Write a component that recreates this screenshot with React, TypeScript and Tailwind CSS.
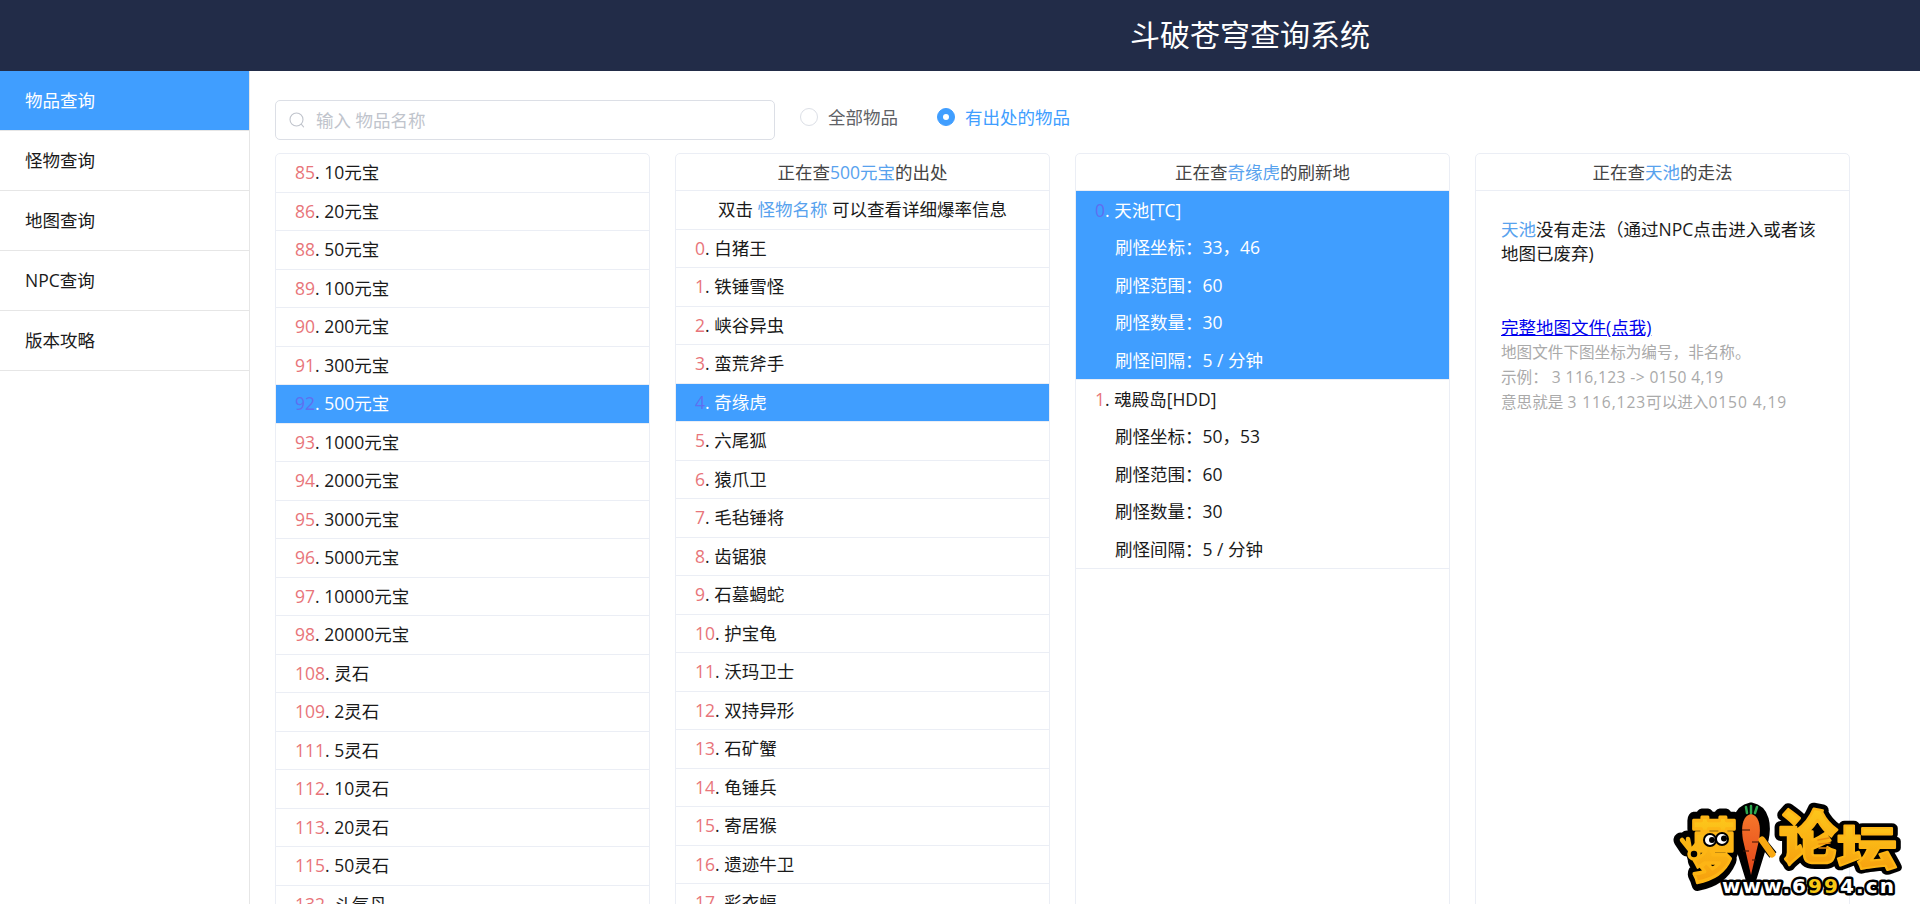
const FONT = '[font-family:"Open_Sans","Noto_Sans_CJK_SC",sans-serif]'

const NAV = ['物品查询', '怪物查询', '地图查询', 'NPC查询', '版本攻略']

const ITEMS: [number, string][] = [
  [85, '10元宝'], [86, '20元宝'], [88, '50元宝'], [89, '100元宝'], [90, '200元宝'],
  [91, '300元宝'], [92, '500元宝'], [93, '1000元宝'], [94, '2000元宝'], [95, '3000元宝'],
  [96, '5000元宝'], [97, '10000元宝'], [98, '20000元宝'], [108, '灵石'], [109, '2灵石'],
  [111, '5灵石'], [112, '10灵石'], [113, '20灵石'], [115, '50灵石'], [132, '斗气丹'],
]

const MONSTERS = [
  '白猪王', '铁锤雪怪', '峡谷异虫', '蛮荒斧手', '奇缘虎', '六尾狐', '猿爪卫', '毛毡锤将', '齿锯狼',
  '石墓蝎蛇', '护宝龟', '沃玛卫士', '双持异形', '石矿蟹', '龟锤兵', '寄居猴', '遗迹牛卫', '彩衣蝠',
]

const SPAWNS = [
  { name: '天池[TC]', coord: '33，46', range: 60, count: 30 },
  { name: '魂殿岛[HDD]', coord: '50，53', range: 60, count: 30 },
]

function Row({ index, name, active }: { index: number; name: string; active?: boolean }) {
  return (
    <div className={`flex h-[38.5px] shrink-0 items-center border-b border-[#ebeef5] pb-[1px] pl-[19px] ${active ? 'bg-[#409eff] text-white' : 'text-[#1a1a1a]'}`}>
      <span className={active ? 'text-[#5f6ff0]' : 'text-[#e8757a]'}>{index}</span>
      <span className="whitespace-pre">. {name}</span>
    </div>
  )
}

function Card({ children }: { children: React.ReactNode }) {
  return (
    <div className="flex w-[375px] shrink-0 flex-col rounded-t-[5px] border border-[#ebeef5]">
      {children}
    </div>
  )
}

function CardTitle({ before, mark, after }: { before: string; mark: string; after: string }) {
  return (
    <div className="flex h-[37px] shrink-0 items-center justify-center border-b border-[#ebeef5] text-[#444]">
      {before}<span className="text-[#58a2ee]">{mark}</span>{after}
    </div>
  )
}

function Spawn({ index, name, coord, range, count, active }: { index: number; name: string; coord: string; range: number; count: number; active?: boolean }) {
  return (
    <div className={`flex flex-col border-b border-[#ebeef5] pl-[19px] ${active ? 'bg-[#409eff] text-white' : 'text-[#1a1a1a]'}`}>
      <div className="flex h-[37.6px] items-center">
        <span className={active ? 'text-[#5f6ff0]' : 'text-[#e8757a]'}>{index}</span>
        <span className="whitespace-pre">. {name}</span>
      </div>
      <div className="flex h-[37.6px] items-center pl-[20px]">刷怪坐标：{coord}</div>
      <div className="flex h-[37.6px] items-center pl-[20px]">刷怪范围：{range}</div>
      <div className="flex h-[37.6px] items-center pl-[20px]">刷怪数量：{count}</div>
      <div className="flex h-[37.6px] items-center pl-[20px]">刷怪间隔：5 / 分钟</div>
    </div>
  )
}

function Radio({ label, checked }: { label: string; checked?: boolean }) {
  return (
    <label className={`flex items-center gap-[10px] ${checked ? 'text-[#409eff]' : 'text-[#606266]'}`}>
      <span className={`flex size-[18px] items-center justify-center rounded-full border ${checked ? 'border-[#409eff] bg-[#409eff]' : 'border-[#dcdfe6] bg-white'}`}>
        {checked && <span className="size-[6px] rounded-full bg-white" />}
      </span>
      {label}
    </label>
  )
}

function Logo() {
  const glyphs = (
    <>
      <text transform="translate(19 72.6) scale(1 1.45)" fontSize="46">萝</text>
      <text x="107" y="57" fontSize="58">论</text>
      <text transform="translate(165 63) scale(1 .78)" fontSize="60">坛</text>
    </>
  )
  return (
    <svg viewBox="0 0 232 96" className="absolute bottom-[6px] right-[16px] h-[96px] w-[232px]">
      <defs>
        <linearGradient id="gold" x1="0" y1="0" x2="0" y2="1">
          <stop offset="0" stopColor="#ffd21f" />
          <stop offset="1" stopColor="#f59a0c" />
        </linearGradient>
        <linearGradient id="carrot" x1="0" y1="0" x2="0" y2="1">
          <stop offset="0" stopColor="#f6762a" />
          <stop offset="1" stopColor="#e2451b" />
        </linearGradient>
      </defs>
      <g fontFamily='"Noto Sans CJK SC", sans-serif' fontWeight="900" strokeLinejoin="round">
        {/* black outline first, then the rounded gold letters on top */}
        <g fill="#000" stroke="#000" strokeWidth="12">{glyphs}</g>
        <path d="M15 47 L9 38 M15 47 L15 36 M21 50 L24 58" stroke="#000" strokeWidth="15" strokeLinecap="round" />
        <path d="M79 5 C64 8 63 24 66 38 L79 80 L92 38 C95 24 94 8 79 5Z M88 37 L101 53" fill="#000" stroke="#000" strokeWidth="9" strokeLinejoin="round" />
        <g fill="url(#gold)" stroke="#fdb515" strokeWidth="2.5">{glyphs}</g>
      </g>
      {/* ok hand left of the first character */}
      <path d="M18 48 L10 38 M18 48 L16 37 M19 49 L25 42" stroke="#fbb614" strokeWidth="4.5" strokeLinecap="round" />
      <circle cx="22" cy="52" r="5" fill="#000" stroke="#fbb614" strokeWidth="3.5" />
      {/* carrot standing in for 卜 */}
      <path d="M79 12 C70 14 69 26 71 38 L79 73 L87 38 C89 26 88 14 79 12Z" fill="url(#carrot)" />
      <path d="M75 11 L74 5 M79 11 V4 M83 11 L85 5" stroke="#2fa84f" strokeWidth="2.5" strokeLinecap="round" />
      <path d="M70 28 H78 M80 40 H87 M71 49 H77 M80 58 H84" stroke="#3a1305" strokeWidth="1" />
      <path d="M90 38 L100 52" stroke="#f9a911" strokeWidth="7" strokeLinecap="round" />
      {/* eyes on the first character */}
      <circle cx="38" cy="38" r="6" fill="#fff" stroke="#000" strokeWidth="2" />
      <circle cx="50" cy="37" r="6" fill="#fff" stroke="#000" strokeWidth="2" />
      <circle cx="40" cy="38" r="3" fill="#000" />
      <circle cx="52" cy="36.5" r="3" fill="#000" />
      {/* little hand inside 论 */}
      <path d="M146 38 L157 36 M147 42 L158 41 M147 46 L156 46" stroke="#e88a10" strokeWidth="1.5" strokeLinecap="round" />
      <text x="50" y="91" fontFamily='"DejaVu Sans", sans-serif' fontWeight="700" fontSize="20" fill="#fff" stroke="#000" strokeWidth="5" strokeLinejoin="round" paintOrder="stroke" textLength="172">
        www.6<tspan fill="#f7c815">99</tspan>4.cn
      </text>
    </svg>
  )
}

export default function App() {
  return (
    <div className={`relative flex h-[904px] flex-col overflow-hidden bg-white text-[17.5px] ${FONT}`}>
      <header className="flex h-[71px] shrink-0 items-center justify-center bg-[#222c48] pb-[3px] pl-[580px] text-[30px] text-white">
        斗破苍穹查询系统
      </header>
      <div className="flex min-h-0 flex-1">
        <nav className="w-[250px] shrink-0 border-r border-[#e6e6e6]">
          {NAV.map((label, i) => (
            <div key={label} className={`flex h-[60px] items-center border-b border-[#e6e6e6] pl-[25px] ${i === 0 ? 'bg-[#409eff] text-white' : 'text-[#1a1a1a]'}`}>
              {label}
            </div>
          ))}
        </nav>
        <main className="min-w-0 flex-1 pl-[25px]">
          <div className="flex h-[82px] items-start pt-[29px]">
            <div className="relative h-[40px] w-[500px]">
              <svg viewBox="0 0 16 16" fill="none" stroke="#c0c4cc" strokeWidth="1.1" className="absolute left-[14px] top-[12px] size-[16px]">
                <circle cx="7.5" cy="7.5" r="6.5" />
                <path d="M12.2 12.2 L14.6 14.8" strokeLinecap="round" />
              </svg>
              <input
                placeholder="输入 物品名称"
                className="h-full w-full rounded-[5px] border border-[#dcdfe6] pb-[1px] pl-[40px] outline-none placeholder:text-[#c0c4cc]"
              />
            </div>
            <div className="ml-[25px] flex h-[34px] items-center gap-[39px]">
              <Radio label="全部物品" />
              <Radio label="有出处的物品" checked />
            </div>
          </div>
          <div className="flex gap-[25px]">
            <Card>
              {ITEMS.map(([index, name]) => (
                <Row key={index} index={index} name={name} active={index === 92} />
              ))}
            </Card>
            <Card>
              <CardTitle before="正在查" mark="500元宝" after="的出处" />
              <div className="flex h-[38.5px] shrink-0 items-center justify-center border-b border-[#ebeef5] pb-[1px] text-[#1a1a1a]">
                双击&nbsp;<span className="text-[#58a2ee]">怪物名称</span>&nbsp;可以查看详细爆率信息
              </div>
              {MONSTERS.map((name, i) => (
                <Row key={name} index={i} name={name} active={i === 4} />
              ))}
            </Card>
            <Card>
              <CardTitle before="正在查" mark="奇缘虎" after="的刷新地" />
              {SPAWNS.map((s, i) => (
                <Spawn key={s.name} index={i} {...s} active={i === 0} />
              ))}
              <div className="h-[400px]" />
            </Card>
            <Card>
              <CardTitle before="正在查" mark="天池" after="的走法" />
              <div className="px-[25px] pt-[26px]">
                <p className="leading-[24px] text-[#1a1a1a]">
                  <span className="text-[#58a2ee]">天池</span>没有走法（通过NPC点击进入或者该地图已废弃)
                </p>
                <a href="#" className="mt-[50px] block leading-[25px] text-[#0000ee] underline">完整地图文件(点我)</a>
                <div className="text-[15.6px] leading-[25px] text-[#aaa]">
                  <div>地图文件下图坐标为编号，非名称。</div>
                  <div>示例：<span className="ml-[4px] tracking-[0.4px]">3 116,123 -&gt; 0150 4,19</span></div>
                  <div>意思就是 <span className="tracking-[0.9px]">3 116,123</span>可以进入<span className="tracking-[0.9px]">0150 4,19</span></div>
                </div>
              </div>
              <div className="h-[400px]" />
            </Card>
          </div>
        </main>
      </div>
      <Logo />
    </div>
  )
}
